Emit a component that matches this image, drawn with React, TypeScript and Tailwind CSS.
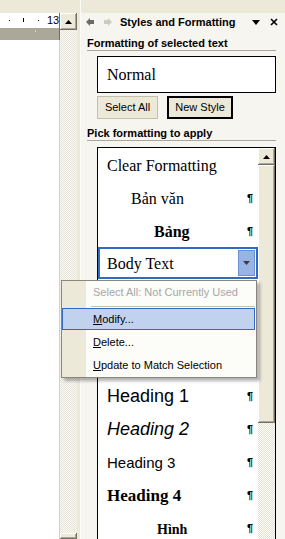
import React from 'react';

const bevel =
  'shadow-[inset_-1px_-1px_#716f64,inset_1px_1px_#ffffff,inset_-2px_-2px_#aca899]';
const dotted =
  'bg-[image:repeating-conic-gradient(#fbfbf8_0_25%,#e6e3d6_0_50%)] bg-[length:2px_2px]';

const UpArrow = () => (
  <svg width="7" height="4" viewBox="0 0 7 4">
    <polygon points="3.5,0 7,4 0,4" fill="#000" />
  </svg>
);

const Pilcrow = () => (
  <span className="font-['Liberation_Sans',sans-serif] font-bold text-[11px] text-black">¶</span>
);

// one row of the style list
const StyleRow = ({ children, pl = 'pl-[9px]', mark = true }: { children?: React.ReactNode; pl?: string; mark?: boolean }) => (
  <div className={`h-[33px] shrink-0 flex items-center justify-between pr-[5px] ${pl}`}>
    <div className="whitespace-nowrap">{children}</div>
    {mark && <Pilcrow />}
  </div>
);

const MenuItem = ({ children, active = false, disabled = false }: { children: React.ReactNode; active?: boolean; disabled?: boolean }) => (
  <div
    className={`shrink-0 flex items-center whitespace-nowrap ${
      active
        ? 'h-[22px] mb-[1px] mr-[1px] bg-[#c1d2ee] border border-[#316ac5] pl-[30px]'
        : 'h-[23px] pl-[31px]'
    } ${disabled ? 'text-[#a7a6aa]' : 'text-black'}`}
  >
    {children}
  </div>
);

export default function App() {
  return (
    <div className="relative w-[285px] h-[539px] overflow-hidden flex bg-[#ece9d8] font-['Liberation_Sans',sans-serif] text-[11px] text-black">
      {/* document area */}
      <div className="w-[60px] flex flex-col">
        <div className="h-[13px] shrink-0 bg-[#ece9d8]" />
        <div className="relative h-[15px] shrink-0 bg-white border-r border-[#716f64]">
          <div className="absolute left-[9px] top-[7px] w-[1px] h-[1px] bg-black" />
          <div className="absolute left-[23px] top-[5px] w-[1px] h-[4px] bg-black" />
          <div className="absolute left-[38px] top-[7px] w-[1px] h-[1px] bg-black" />
          <span className="absolute left-[47px] top-[1px] text-[11px] leading-[13px]">13</span>
        </div>
        <div className="relative h-[12px] shrink-0 bg-[#aca899] border-r border-[#716f64]">
          <div className="absolute left-[35px] top-[2px] w-[1px] h-[2px] bg-[#d8d6cc]" />
        </div>
        <div className="flex-1 bg-white border-r border-[#d4d0c8]" />
      </div>

      {/* document scrollbar */}
      <div className="w-[17px] flex flex-col">
        <div className="h-[13px] shrink-0" />
        <div className={`h-[17px] shrink-0 flex items-center justify-center bg-[#ece9d8] ${bevel}`}>
          <UpArrow />
        </div>
        <div className={`flex-1 ${dotted}`} />
        <div className={`h-[6px] shrink-0 bg-[#ece9d8] ${bevel}`} />
      </div>

      {/* splitter */}
      <div className="w-[4px] bg-[#ece9d8] border-r border-[#fbfbf8]" />

      {/* task pane */}
      <div className="flex-1 flex flex-col bg-[#f6f5f0]">
        <div className="h-[13px] shrink-0 bg-[#ece9d8]" />
        <div className="h-[18px] shrink-0 flex items-center pl-[5px] pr-[7px]">
          <svg width="8" height="8" viewBox="0 0 8 8">
            <polygon points="0,4 4,0 4,2 8,2 8,6 4,6 4,8" fill="#6d6b62" />
          </svg>
          <svg width="8" height="8" viewBox="0 0 8 8" className="ml-[10px]">
            <polygon points="8,4 4,0 4,2 0,2 0,6 4,6 4,8" fill="#cdcbbf" />
          </svg>
          <span className="ml-[8px] font-bold text-[11px] whitespace-nowrap">Styles and Formatting</span>
          <svg width="8" height="5" viewBox="0 0 8 5" className="ml-auto">
            <polygon points="0,0 8,0 4,5" fill="#000" />
          </svg>
          <svg width="8" height="8" viewBox="0 0 8 8" className="ml-[10px]">
            <path d="M1 1 L7 7 M7 1 L1 7" stroke="#000" strokeWidth="1.6" />
          </svg>
        </div>

        <div className="mt-[5px] ml-[6px] mr-[9px] h-[15px] shrink-0 flex items-center border-b border-[#aca899] font-bold text-[11px] whitespace-nowrap">
          Formatting of selected text
        </div>

        <div className="mt-[5px] ml-[16px] mr-[9px] h-[37px] shrink-0 bg-white border border-black flex items-center pl-[9px] font-['Liberation_Serif',serif] text-[16px]">
          Normal
        </div>

        <div className="mt-[3px] ml-[16px] flex gap-[9px] shrink-0">
          <div className="w-[61px] h-[23px] bg-[#ece9d8] border border-[#c2bfae] flex items-center justify-center">Select All</div>
          <div className="w-[66px] h-[23px] bg-[#ece9d8] border-2 border-black flex items-center justify-center">New Style</div>
        </div>

        <div className="mt-[7px] ml-[6px] mr-[9px] h-[15px] shrink-0 flex items-center border-b border-[#aca899] font-bold text-[11px] whitespace-nowrap">
          Pick formatting to apply
        </div>

        <div className="mt-[6px] ml-[16px] mr-[9px] flex-1 min-h-0 bg-white border border-black border-b-0 flex overflow-hidden">
          <div className="flex-1 flex flex-col pt-[1px] font-['Liberation_Serif',serif] text-[16px]">
            <StyleRow mark={false}>Clear Formatting</StyleRow>
            <StyleRow pl="pl-[33px]">Bản văn</StyleRow>
            <StyleRow pl="pl-[56px]"><span className="font-bold">Bảng</span></StyleRow>
            <div className="h-[33px] shrink-0">
              <div className="h-[32px] -mt-[1px] border-2 border-[#316ac5] flex items-center justify-between pl-[7px] pr-[1px]">
                <span className="pt-[1px]">Body Text</span>
                <div className="w-[17px] h-[26px] bg-[#98b4e4] border border-[#6b8fd4] flex items-center justify-center">
                  <svg width="7" height="4" viewBox="0 0 7 4">
                    <polygon points="0,0 7,0 3.5,4" fill="#3d3d3d" />
                  </svg>
                </div>
              </div>
            </div>
            <div className="h-[33px] shrink-0" />
            <div className="h-[33px] shrink-0" />
            <div className="h-[33px] shrink-0" />
            <StyleRow><span className="font-['Liberation_Sans',sans-serif] text-[18px]">Heading 1</span></StyleRow>
            <StyleRow><span className="font-['Liberation_Sans',sans-serif] italic text-[18px]">Heading 2</span></StyleRow>
            <StyleRow><span className="font-['Liberation_Sans',sans-serif] text-[15px]">Heading 3</span></StyleRow>
            <StyleRow><span className="font-bold text-[17px]">Heading 4</span></StyleRow>
            <StyleRow pl="pl-[59px]"><span className="font-bold text-[14px]">Hình</span></StyleRow>
          </div>
          <div className="w-[17px] flex flex-col">
            <div className={`h-[17px] shrink-0 flex items-center justify-center bg-[#ece9d8] ${bevel}`}>
              <UpArrow />
            </div>
            <div className={`h-[258px] shrink-0 bg-[#ece9d8] ${bevel}`} />
            <div className={`flex-1 ${dotted}`} />
          </div>
        </div>
      </div>

      {/* context menu */}
      <div className="absolute left-[61px] top-[280px] w-[196px] h-[98px] border border-[#8a867a] shadow-[3px_3px_3px_rgba(0,0,0,0.3)] flex flex-col bg-[linear-gradient(to_right,#ece9d8_24px,#fcfcf9_24px)]">
        <MenuItem disabled>Select All: Not Currently Used</MenuItem>
        <div className="h-[4px] shrink-0 flex items-center pl-[29px] pr-[1px]">
          <div className="flex-1 h-[1px] bg-[#c5c2b2]" />
        </div>
        <MenuItem active><span><u>M</u>odify...</span></MenuItem>
        <MenuItem><span><u>D</u>elete...</span></MenuItem>
        <MenuItem><span><u>U</u>pdate to Match Selection</span></MenuItem>
      </div>
    </div>
  );
}
